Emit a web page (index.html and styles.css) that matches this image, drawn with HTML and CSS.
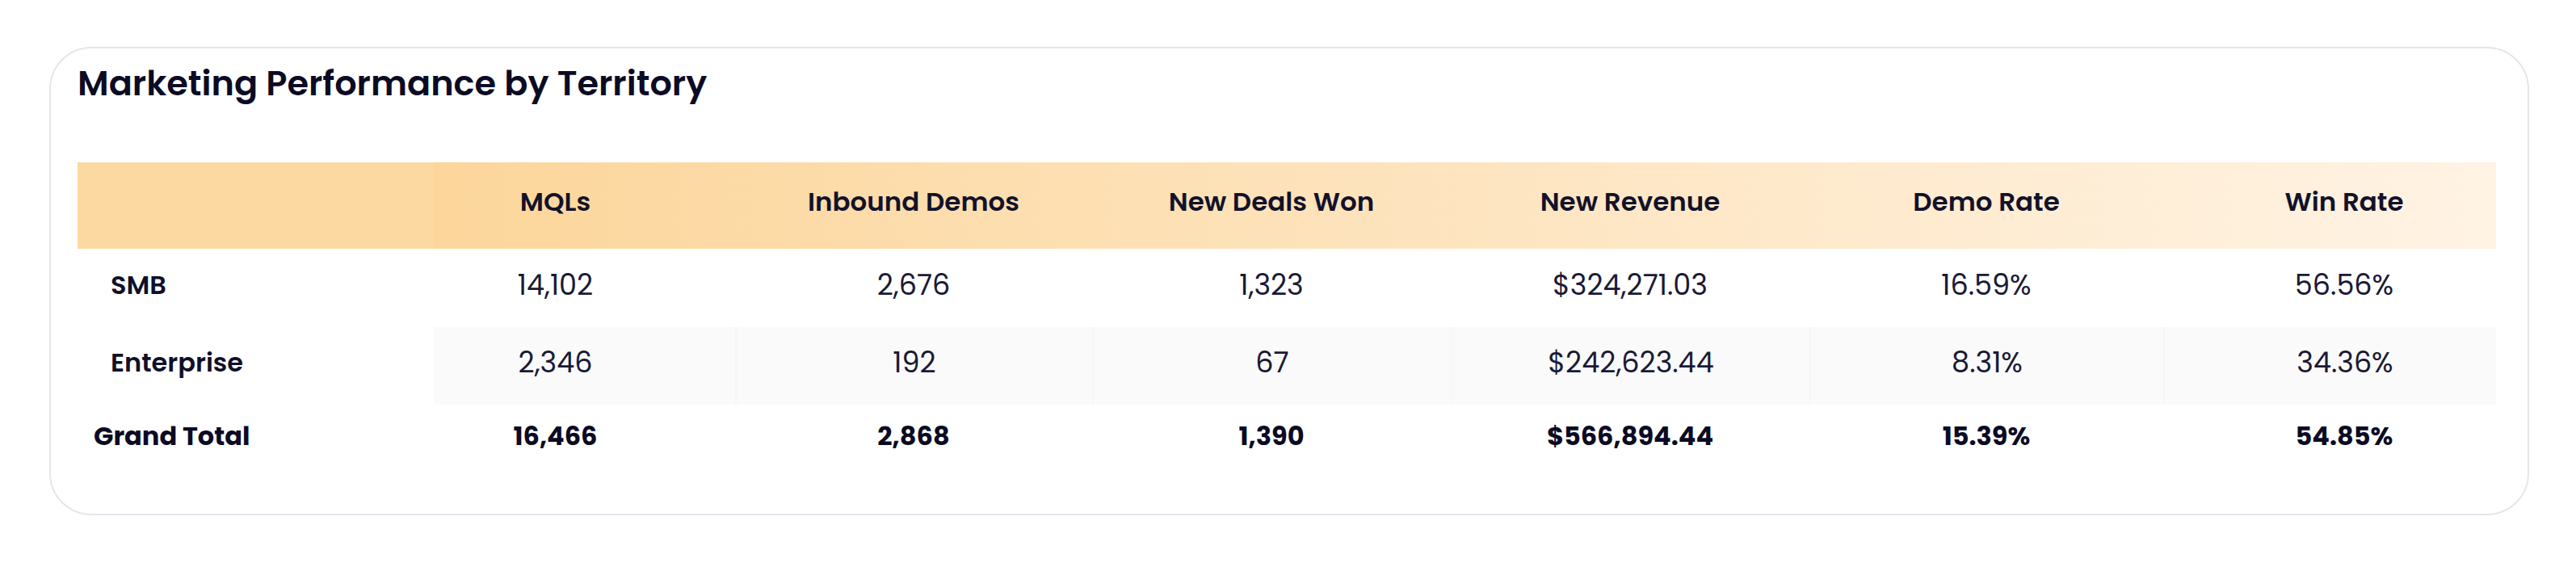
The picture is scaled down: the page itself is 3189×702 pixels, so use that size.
FILE: index.html
```html
<!DOCTYPE html>
<html lang="en">
<head>
<meta charset="utf-8">
<title>Marketing Performance by Territory</title>
<link rel="stylesheet" href="styles.css">
</head>
<body>
<section class="card">
  <h2 class="title">Marketing Performance by Territory</h2>
  <div class="table">
    <div class="row head">
      <div class="cell label"></div>
      <div class="cell c1">MQLs</div>
      <div class="cell">Inbound Demos</div>
      <div class="cell">New Deals Won</div>
      <div class="cell">New Revenue</div>
      <div class="cell">Demo Rate</div>
      <div class="cell c6">Win Rate</div>
    </div>
    <div class="row body">
      <div class="cell label">SMB</div>
      <div class="cell c1">14,102</div>
      <div class="cell">2,676</div>
      <div class="cell">1,323</div>
      <div class="cell">$324,271.03</div>
      <div class="cell">16.59%</div>
      <div class="cell c6">56.56%</div>
    </div>
    <div class="row body alt">
      <div class="cell label">Enterprise</div>
      <div class="cell c1">2,346</div>
      <div class="cell">192</div>
      <div class="cell">67</div>
      <div class="cell">$242,623.44</div>
      <div class="cell">8.31%</div>
      <div class="cell c6">34.36%</div>
    </div>
    <div class="row total">
      <div class="cell label">Grand Total</div>
      <div class="cell c1">16,466</div>
      <div class="cell">2,868</div>
      <div class="cell">1,390</div>
      <div class="cell">$566,894.44</div>
      <div class="cell">15.39%</div>
      <div class="cell c6">54.85%</div>
    </div>
  </div>
</section>
</body>
</html>
```

FILE: styles.css
```css
html, body {
  margin: 0;
  padding: 0;
  background: #ffffff;
}

body {
  font-family: "Poppins", "Inter", "Noto Sans", sans-serif;
  color: #10102a;
  padding: 58px 0 0 61px;
}

.card {
  box-sizing: border-box;
  width: 3070px;
  height: 580px;
  border: 2px solid #e3e6eb;
  border-radius: 52px;
  padding: 16px 39px 0 33px;
  background: #ffffff;
}

.title {
  margin: 0;
  font-size: 43px;
  line-height: 54px;
  font-weight: 600;
  color: #0c0b24;
}

.table {
  margin-top: 71px;
  width: 2994px;
}

.row {
  display: grid;
  grid-template-columns: 441px 373px 442px 444px 444px 438px 412px;
  align-items: center;
}

.cell {
  text-align: center;
  padding-bottom: 8px;
  font-size: 35px;
  line-height: 42px;
  white-space: nowrap;
}

.cell.c1 {
  padding-right: 72px;
}

.cell.c6 {
  padding-left: 36px;
}

.cell.label {
  text-align: left;
  padding-left: 41px;
  font-weight: 600;
  font-size: 32px;
}

.head {
  height: 107px;
  background: linear-gradient(90deg, #fcd9a1 0, #fcd9a1 441px, #fcd69b 441px, #fff3e4 100%);
}

.head .cell {
  font-weight: 600;
  font-size: 32.5px;
  padding-bottom: 10px;
  color: #12122a;
}

.body {
  height: 97px;
}

.body .cell {
  color: #1a1a36;
  font-weight: 400;
}

.body .cell.label {
  font-weight: 600;
  color: #10102a;
}

.alt {
  height: 96px;
  background: linear-gradient(90deg, transparent 0, transparent 441px, #fafafa 441px);
}

.alt .cell + .cell + .cell {
  border-left: 2px solid #f6f6f6;
  height: 96px;
  box-sizing: border-box;
  display: flex;
  align-items: center;
  justify-content: center;
}

.total {
  height: 78px;
}

.total .cell {
  font-weight: 700;
  font-size: 32px;
  padding-bottom: 0;
  color: #0c0b24;
}

.total .cell.label {
  padding-left: 20px;
}
```
